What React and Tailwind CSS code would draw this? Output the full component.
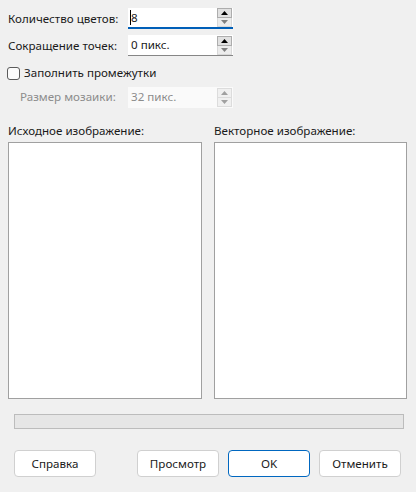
import React from "react";

function Spin({ disabled, upDark }) {
  const upColor = disabled ? "#a0a0a0" : "#000000";
  const downColor = disabled ? "#a0a0a0" : "#808080";
  return (
    <div className="flex flex-col w-[15px] ml-auto mr-[1px]">
      <div
        className={
          "h-[10px] flex items-center justify-center border " +
          (disabled ? "border-[#dcdcdc] bg-[#f0f0f0]" : upDark ? "border-[#adadad] bg-[#e1e1e1]" : "border-[#d0d0d0] bg-[#ececec]")
        }
      >
        <svg width="7" height="4" viewBox="0 0 7 4">
          <polygon points="0,4 7,4 3.5,0" fill={upColor} />
        </svg>
      </div>
      <div
        className={
          "h-[9px] flex items-center justify-center border border-t-0 " +
          (disabled ? "border-[#dcdcdc] bg-[#f0f0f0]" : "border-[#d8d8d8] bg-[#ececec]")
        }
      >
        <svg width="7" height="4" viewBox="0 0 7 4">
          <polygon points="0,0 7,0 3.5,4" fill={downColor} />
        </svg>
      </div>
    </div>
  );
}

function Field({ value, focused, disabled, caret }) {
  return (
    <div
      className={
        "w-[105px] h-[21px] flex items-center " +
        (disabled
          ? "bg-[#fafafa]"
          : focused
          ? "bg-white border-b-2 border-[#005fb8]"
          : "bg-white border-b border-[#868686]")
      }
    >
      <span className={"pl-[3px] relative " + (disabled ? "text-[#8c8c8c]" : "text-[#1a1a1a]")}>
        {caret && <span className="absolute left-[2px] top-[1px] w-px h-[15px] bg-black" />}
        {value}
      </span>
      <Spin disabled={disabled} upDark={!disabled} />
    </div>
  );
}

function Btn({ children, primary }) {
  return (
    <div
      className={
        "w-[82px] h-[27px] flex items-center justify-center bg-white rounded-[4px] " +
        (primary ? "border-[1.5px] border-[#0067c0]" : "border border-[#d0d0d0]")
      }
    >
      {children}
    </div>
  );
}

export default function App() {
  return (
    <div
      className="w-[416px] h-[492px] bg-[#f0f0f0] text-[11.6px] text-[#1a1a1a] overflow-hidden"
      style={{ fontFamily: '"Noto Sans", "Open Sans", sans-serif' }}
    >
      <div className="pt-[8px]">
        <div className="flex items-center h-[21px]">
          <span className="pl-[8px] w-[128px]">Количество цветов:</span>
          <Field value="8" focused caret />
        </div>
        <div className="flex items-center h-[21px] mt-[6px]">
          <span className="pl-[8px] w-[128px]">Сокращение точек:</span>
          <Field value="0 пикс." />
        </div>
        <div className="flex items-center h-[14px] mt-[10px] pl-[7px]">
          <div className="w-[13px] h-[13px] border border-[#5a5a5a] rounded-[3px] bg-[#fbfbfb]" />
          <span className="pl-[4px]">Заполнить промежутки</span>
        </div>
        <div className="flex items-center h-[20px] mt-[7px]">
          <span className="pl-[20px] w-[128px] text-[#8c8c8c]">Размер мозаики:</span>
          <Field value="32 пикс." disabled />
        </div>
      </div>

      <div className="flex mt-[13px] pl-[8px]">
        <div className="w-[194px] mr-[12px]">
          <div className="h-[22px] flex items-center">Исходное изображение:</div>
          <div className="h-[257px] bg-white border border-[#a0a0a0]" />
        </div>
        <div className="w-[193px]">
          <div className="h-[22px] flex items-center">Векторное изображение:</div>
          <div className="h-[257px] bg-white border border-[#a0a0a0]" />
        </div>
      </div>

      <div className="ml-[14px] mt-[15px] w-[390px] h-[15px] bg-[#e6e6e6] border border-[#bcbcbc]" />

      <div className="flex mt-[21px] pl-[14px]">
        <Btn>Справка</Btn>
        <div className="ml-[41px]">
          <Btn>Просмотр</Btn>
        </div>
        <div className="ml-[9px]">
          <Btn primary>OK</Btn>
        </div>
        <div className="ml-[9px]">
          <Btn>Отменить</Btn>
        </div>
      </div>
    </div>
  );
}
